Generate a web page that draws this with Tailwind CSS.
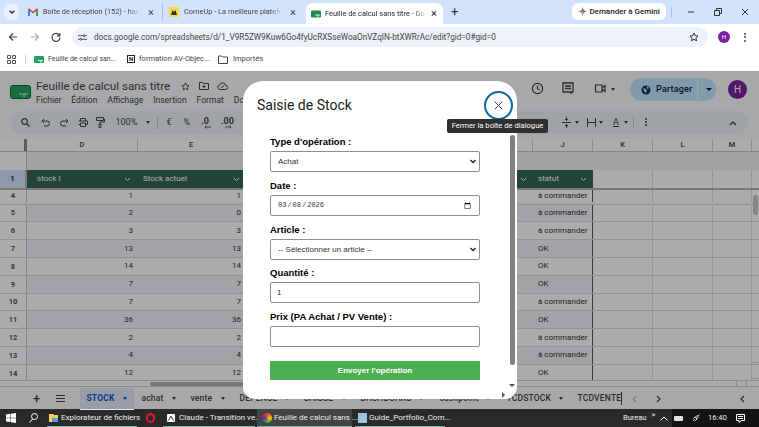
<!DOCTYPE html>
<html lang="fr">
<head>
    <meta charset="UTF-8">
    <title>Feuille de calcul sans titre</title>
    <script src="https://cdn.jsdelivr.net/npm/@tailwindcss/browser@4"></script>
</head>
<body class="bg-white">
<div class="relative w-[759px] h-[427px] overflow-hidden flex flex-col font-['Roboto',sans-serif]">

    <!-- chrome tabs -->
    <div class="h-[24px] bg-[#d3e3fd] flex items-end text-[7.400px] text-[#474747] shrink-0">
        <div class="w-[15px] h-[16px] ml-[4px] mb-[4px] rounded-[5px] bg-[#e8f0fe] flex items-center justify-center shrink-0">
            <svg class="w-[8px] h-[8px]" viewBox="0 0 10 10" fill="none" stroke="#1f1f1f" stroke-width="1.6"><path d="M2 3.5l3 3 3-3"/></svg>
        </div>
        <div class="w-[144px] h-[18px] mb-[3px] flex items-center pl-[9px] border-r border-[#a8c0e8] shrink-0">
            <svg class="w-[10px] h-[8px] shrink-0" viewBox="0 0 20 16"><path d="M0 2l3-1 7 6 7-6 3 1v14h-4V6l-6 5-6-5v10H0z" fill="#ea4335"/><path d="M0 2v14h4V6z" fill="#4285f4"/><path d="M20 2v14h-4V6z" fill="#34a853"/></svg>
            <span class="ml-[5px] w-[97px] whitespace-nowrap [mask-image:linear-gradient(to_right,black_88%,transparent)]">Boîte de réception (152) - hand</span>
            <span class="ml-[8px] text-[11px] leading-none">×</span>
        </div>
        <div class="w-[143px] h-[18px] mb-[3px] flex items-center pl-[6px] shrink-0">
            <span class="w-[10px] h-[10px] rounded-[2px] bg-[#f7d84a] shrink-0 flex items-center justify-center"><svg class="w-[6px] h-[5px]" viewBox="0 0 6 5" fill="#333"><path d="M0 5l1.500-5 1.500 2 1.500-2L6 5z"/></svg></span>
            <span class="ml-[5px] w-[98px] whitespace-nowrap [mask-image:linear-gradient(to_right,black_88%,transparent)]">ComeUp - La meilleure platefor</span>
            <span class="ml-[8px] text-[11px] leading-none">×</span>
        </div>
        <div class="w-[137px] h-[21px] bg-white rounded-t-[7px] flex items-center pl-[5px] text-[#1f1f1f] shrink-0">
            <svg class="w-[10px] h-[8px] shrink-0" viewBox="0 0 20 14"><rect width="20" height="14" rx="2" fill="#1e8e4e"/><path d="M8 9h10M14 9v5" stroke="#fff" stroke-width="1.600"/></svg>
            <span class="ml-[4px] w-[101px] whitespace-nowrap [mask-image:linear-gradient(to_right,black_88%,transparent)]">Feuille de calcul sans titre - Goo</span>
            <span class="ml-[5px] text-[11px] leading-none">×</span>
        </div>
        <span class="ml-[8px] mb-[3px] text-[13px] leading-[18px] text-[#333] shrink-0">+</span>
        <div class="ml-[114px] mb-[4px] w-[94px] h-[17px] bg-white rounded-[6px] flex items-center pl-[6px] text-[8px] font-medium text-[#1f1f1f] shrink-0">
            <svg class="w-[9px] h-[9px]" viewBox="0 0 10 10"><path d="M5 0C5.3 3 7 4.700 10 5 7 5.300 5.300 7 5 10 4.700 7 3 5.300 0 5 3 4.700 4.700 3 5 0z" fill="#4285f4"/><path d="M5 0C5.300 3 7 4.700 10 5L5 5z" fill="#ea4335"/><path d="M0 5c3 .3 4.700 2 5 5L5 5z" fill="#fbbc04"/></svg>
            <span class="ml-[2px] whitespace-nowrap">Demander à Gemini</span>
        </div>
        <span class="ml-[5px] mb-[7px] w-px h-[10px] bg-[#a8c0e8] shrink-0"></span>
        <div class="flex items-center mb-[8px] shrink-0">
            <svg class="ml-[15px] w-[8px] h-[8px]" viewBox="0 0 8 8" stroke="#333"><path d="M1 4h6"/></svg>
            <svg class="ml-[19px] w-[8px] h-[8px]" viewBox="0 0 8 8" stroke="#333" fill="none"><path d="M.5 2.500h5v5h-5zM2.500 2.500v-2h5v5h-2"/></svg>
            <svg class="ml-[19px] w-[8px] h-[8px]" viewBox="0 0 8 8" stroke="#333"><path d="M1 1l6 6M7 1l-6 6"/></svg>
        </div>
    </div>

    <!-- address bar -->
    <div class="h-[23px] pt-[3px] bg-white flex items-center shrink-0 text-[#444]">
        <svg class="ml-[8px] w-[10px] h-[10px]" viewBox="0 0 10 10" fill="none" stroke="#444" stroke-width="1.200"><path d="M9 5H1.500M5 1.500L1.500 5 5 8.500"/></svg>
        <svg class="ml-[12px] w-[10px] h-[10px]" viewBox="0 0 10 10" fill="none" stroke="#aaa" stroke-width="1.200"><path d="M1 5h7.500M5 1.500L8.500 5 5 8.500"/></svg>
        <svg class="ml-[11px] w-[10px] h-[10px]" viewBox="0 0 10 10" fill="none" stroke="#444" stroke-width="1.200"><path d="M8.500 3.500A4 4 0 1 0 9 5.500M8.800 1v2.800H6"/></svg>
        <div class="ml-[11px] w-[636px] h-[20px] bg-[#edf2fa] rounded-full flex items-center pl-[6px] relative shrink-0">
            <svg class="w-[9px] h-[9px]" viewBox="0 0 10 10" fill="none" stroke="#444"><path d="M0 3h6M8 3h2M0 7h2M4 7h6"/><circle cx="7" cy="3" r="1"/><circle cx="3" cy="7" r="1"/></svg>
            <span class="ml-[7px] text-[8.200px] whitespace-nowrap">docs.google.com/spreadsheets/d/1_V9R5ZW9Kuw6Go4fyUcRXSseWoaOnVZqIN-btXWRrAc/edit?gid=0#gid=0</span>
            <svg class="absolute right-[9px] w-[10px] h-[10px]" viewBox="0 0 10 10" fill="none" stroke="#333"><path d="M5 1l1.200 2.700 2.800.3-2.100 1.900.6 2.900L5 7.300 2.500 8.800l.6-2.900L1 4l2.800-.3z"/></svg>
        </div>
        <span class="ml-[10px] w-[12px] h-[12px] rounded-full bg-[#7b1fa2] text-white text-[6px] leading-[12px] text-center shrink-0">H</span>
        <span class="ml-[14px] flex flex-col gap-[1.500px] shrink-0"><i class="w-[2px] h-[2px] rounded-full bg-[#444]"></i><i class="w-[2px] h-[2px] rounded-full bg-[#444]"></i><i class="w-[2px] h-[2px] rounded-full bg-[#444]"></i></span>
    </div>

    <!-- bookmarks -->
    <div class="h-[24px] bg-white flex items-center shrink-0 text-[7.500px] text-[#444]">
        <svg class="ml-[7px] w-[9px] h-[9px]" viewBox="0 0 9 9" fill="none" stroke="#555"><path d="M.5.500h3v3h-3zM5.500.500h3v3h-3zM.5 5.500h3v3h-3zM5.500 5.500h3v3h-3z"/></svg>
        <span class="ml-[9px] w-px h-[9px] bg-[#ccc]"></span>
        <svg class="ml-[8px] w-[10px] h-[7px]" viewBox="0 0 20 14"><rect width="20" height="14" rx="2" fill="#1ea362"/><path d="M8 9h10M14 9v5" stroke="#fff" stroke-width="1.600"/></svg>
        <span class="ml-[4px] w-[67px] text-[7px] whitespace-nowrap">Feuille de calcul san...</span>
        <span class="ml-[12px] w-[8px] h-[8px] border border-[#222] text-[6px] leading-[6px] text-center font-bold text-[#111]">N</span>
        <span class="ml-[4px] w-[68px] whitespace-nowrap">formation AV-Objec...</span>
        <svg class="ml-[11px] w-[10px] h-[9px]" viewBox="0 0 10 9" fill="none" stroke="#444"><path d="M.5 1h3l1 1h5v6.500h-9z"/></svg>
        <span class="ml-[5px]">Importés</span>
    </div>

    <!-- sheets app, dimmed -->
    <div class="relative grow flex flex-col bg-[#f9fbfd] text-[#444746]">
        <div class="h-[40px] flex shrink-0 relative">
            <svg class="ml-[10px] mt-[14px] w-[21px] h-[14px]" viewBox="0 0 21 14"><rect x=".5" y=".5" width="20" height="13" rx="2.500" fill="#21a464" stroke="#0f6b3c"/><path d="M9 9h9M14 9v3" stroke="#fff" stroke-opacity=".85" stroke-width="1.100"/></svg>
            <div class="ml-[5px] mt-[8px]">
                <div class="flex items-center text-[11.700px] leading-[14px] whitespace-nowrap">Feuille de calcul sans titre
                    <svg class="ml-[11px] w-[9px] h-[9px]" viewBox="0 0 10 10" fill="none" stroke="#444"><path d="M5 1l1.200 2.700 2.800.3-2.100 1.900.6 2.900L5 7.300 2.500 8.800l.6-2.900L1 4l2.800-.3z"/></svg>
                    <svg class="ml-[9px] w-[10px] h-[8px]" viewBox="0 0 10 8" fill="none" stroke="#444"><path d="M.5.500h3l1 1h5v6h-9zM3.500 4.500h3M5 3v3"/></svg>
                    <svg class="ml-[8px] w-[11px] h-[8px]" viewBox="0 0 11 8" fill="none" stroke="#444"><path d="M3 7.500h5.500a2 2 0 0 0 .3-4A3.300 3.300 0 0 0 2.500 3 2.300 2.300 0 0 0 3 7.500zM4 4.500l1 1 2-2"/></svg>
                </div>
                <div class="flex gap-[10px] text-[8.500px] leading-[12px] mt-[1px] whitespace-nowrap"><span>Fichier</span><span>Édition</span><span>Affichage</span><span>Insertion</span><span>Format</span><span>Données</span></div>
            </div>
            <svg class="absolute left-[531px] top-[11px] w-[13px] h-[13px]" viewBox="0 0 14 14" fill="none" stroke="#444" stroke-width="1.300"><circle cx="7" cy="7" r="5.500"/><path d="M7 4v3.200l2 1.300"/></svg>
            <svg class="absolute left-[562px] top-[11px] w-[12px] h-[13px]" viewBox="0 0 12 13" fill="none" stroke="#444" stroke-width="1.300"><path d="M1 1h10v9H1zM3 4h6M3 6.500h6M9 10v2"/></svg>
            <svg class="absolute left-[594px] top-[12px] w-[12px] h-[11px]" viewBox="0 0 12 11" fill="none" stroke="#444" stroke-width="1.200"><path d="M1.500 2h6.500v7H1.500zM8 5l3-2.500v6L8 6"/></svg>
            <span class="absolute left-[611px] top-[17px] border-x-[2.500px] border-x-transparent border-t-[3px] border-t-[#444]"></span>
            <div class="absolute left-[630px] top-[7px] w-[86px] h-[23px] rounded-full bg-[#c2e7ff] flex items-center text-[9px] tracking-[0.2px] text-[#001d35] font-medium">
                <svg class="ml-[11px] w-[10px] h-[10px]" viewBox="0 0 10 10"><circle cx="5" cy="5" r="4.500" fill="#0b3a5c"/><path d="M2 3l3 1 1 2-2 2zM6 1l2 2-2 1z" fill="#c2e7ff"/></svg>
                <span class="ml-[5px] w-[41px]">Partager</span>
                <span class="ml-[0px] w-px h-[23px] bg-white/70"></span>
                <span class="ml-[8px] border-x-[3px] border-x-transparent border-t-[3px] border-t-[#001d35]"></span>
            </div>
            <div class="absolute left-[728px] top-[9px] w-[19px] h-[19px] rounded-full bg-[#7b1fa2] text-white text-[10px] leading-[19px] text-center">H</div>
        </div>

        <!-- toolbar -->
        <div class="h-[23px] mx-[11px] bg-[#edf2fa] rounded-full flex items-center text-[9px] shrink-0 relative">
            <svg class="ml-[9.500px] w-[9px] h-[9px]" viewBox="0 0 9 9" fill="none" stroke="#444" stroke-width="1.200"><circle cx="3.500" cy="3.500" r="2.800"/><path d="M5.500 5.500L8.500 8.500"/></svg>
            <svg class="ml-[11px] w-[9px] h-[9px]" viewBox="0 0 9 9" fill="none" stroke="#444"><path d="M1 3h5a2 2 0 0 1 0 5H3M3 1L1 3l2 2"/></svg>
            <svg class="ml-[10px] w-[9px] h-[9px]" viewBox="0 0 9 9" fill="none" stroke="#444"><path d="M8 3H3a2 2 0 0 0 0 5h3M6 1l2 2-2 2"/></svg>
            <svg class="ml-[9px] w-[10px] h-[9px]" viewBox="0 0 10 9" fill="none" stroke="#444"><path d="M2.500 3V.5h5V3M.5 3h9v3.500h-2M2.500 6.500h-2M2.500 5h5v3.500h-5z"/></svg>
            <svg class="ml-[8px] w-[9px] h-[11px]" viewBox="0 0 9 11" fill="none" stroke="#444"><path d="M.5.500h7v3h-7zM7.500 2h1v3H4v2M3 7h2v3.500H3z"/></svg>
            <span class="ml-[11px] w-[22px]">100%</span>
            <span class="ml-[8px] border-x-[2.500px] border-x-transparent border-t-[3px] border-t-[#444]"></span>
            <span class="ml-[7px] w-px h-[12px] bg-[#ccc]"></span>
            <span class="ml-[9px]">€</span>
            <span class="ml-[12px]">%</span>
            <span class="ml-[11px] font-bold relative top-[-1px]">.0<svg class="absolute left-[3px] top-[10px] w-[7px] h-[4px]" viewBox="0 0 7 4" fill="none" stroke="#444" stroke-width=".8"><path d="M7 2H1M2.500.5L1 2l1.500 1.500"/></svg></span>
            <span class="ml-[12px] font-bold relative top-[-1px]">.00<svg class="absolute left-[4px] top-[10px] w-[7px] h-[4px]" viewBox="0 0 7 4" fill="none" stroke="#444" stroke-width=".8"><path d="M0 2h6M4.500.5L6 2 4.500 3.500"/></svg></span>
            <svg class="absolute left-[551px] top-[6px] w-[9px] h-[11px]" viewBox="0 0 9 11" fill="none" stroke="#444"><path d="M0 5.500h9M4.500 0v3.500M3 2l1.500 1.500L6 2M4.500 11V7.500M3 9l1.500-1.500L6 9"/></svg>
            <span class="absolute left-[564px] top-[10px] border-x-[2.500px] border-x-transparent border-t-[3px] border-t-[#444]"></span>
            <svg class="absolute left-[576px] top-[6px] w-[9px] h-[11px]" viewBox="0 0 9 11" fill="none" stroke="#444"><path d="M.5 1v9M8.500 1v9M.5 5.500h8"/></svg>
            <span class="absolute left-[588px] top-[10px] border-x-[2.500px] border-x-transparent border-t-[3px] border-t-[#444]"></span>
            <span class="absolute left-[602px] top-[5px] underline">A</span>
            <span class="absolute left-[613px] top-[10px] border-x-[2.500px] border-x-transparent border-t-[3px] border-t-[#444]"></span>
            <span class="absolute left-[622px] top-[5px] w-px h-[12px] bg-[#ccc]"></span>
            <span class="absolute left-[634px] top-[7px] flex flex-col gap-px"><i class="w-[2px] h-[2px] rounded-full bg-[#444]"></i><i class="w-[2px] h-[2px] rounded-full bg-[#444]"></i><i class="w-[2px] h-[2px] rounded-full bg-[#444]"></i></span>
            <svg class="absolute left-[718px] top-[9px] w-[8px] h-[6px]" viewBox="0 0 8 6" fill="none" stroke="#444" stroke-width="1.300"><path d="M1 5l3-3 3 3"/></svg>
        </div>

        <!-- grid -->
        <div class="mt-[5px] grow flex flex-col min-h-0 text-[8px] relative">
            <div id="col-head" class="h-[13px] flex bg-white border-b border-[#c7c7c7] text-[7.500px] text-[#444] shrink-0"></div>
            <div id="frozen" class="h-[18px] flex bg-[#f1f3f4] shrink-0"></div>
            <div class="h-[20px] flex shrink-0 border-b-[2px] border-[#b4b4b4]">
                <div class="w-[27px] bg-[#d3e3fd] text-[#062e6f] text-[7.500px] font-bold flex items-center justify-center border-r-[2px] border-[#b4b4b4]">1</div>
                <div class="w-[111px] bg-[#356853] text-white flex items-center justify-between pl-[10px] pr-[7px]"><span>stock I</span><svg class="w-[7px] h-[5px]" viewBox="0 0 7 5" fill="none" stroke="#fff"><path d="M1 1l2.500 2.500L6 1"/></svg></div>
                <div class="w-[107px] bg-[#356853] text-white flex items-center justify-between pl-[5px] pr-[5px]"><span>Stock actuel</span><svg class="w-[7px] h-[5px]" viewBox="0 0 7 5" fill="none" stroke="#fff"><path d="M1 1l2.500 2.500L6 1"/></svg></div>
                <div class="w-[288px] bg-[#356853] flex items-center justify-end pr-[6px]"><svg class="w-[7px] h-[5px]" viewBox="0 0 7 5" fill="none" stroke="#fff"><path d="M1 1l2.500 2.500L6 1"/></svg></div>
                <div class="w-[60px] bg-[#356853] text-white flex items-center justify-between pl-[5px] pr-[6px]"><span>statut</span><svg class="w-[7px] h-[5px]" viewBox="0 0 7 5" fill="none" stroke="#fff"><path d="M1 1l2.500 2.500L6 1"/></svg></div>
                <div class="grow bg-white flex"><i class="w-[60px] border-r border-[#e0e0e0]"></i><i class="w-[60px] border-r border-[#e0e0e0]"></i><i class="w-[39px] border-r border-[#e0e0e0]"></i></div>
            </div>
            <div id="rows" class="h-[190px] overflow-hidden flex flex-col shrink-0"></div>
            <div class="h-[7px] bg-white border-y border-[#d0d0d0] shrink-0 relative">
                <span class="absolute left-[150px] top-[1px] w-[95px] h-[4px] rounded-full bg-[#b0b0b0]"></span>
                <span class="absolute left-[736px] top-0 w-[11px] h-[5px] border-x border-[#d0d0d0]"></span>
            </div>

            <!-- vertical scrollbar -->
            <span class="absolute left-[753px] top-[56px] w-[5px] h-[20px] rounded-full bg-[#c8c8c8]"></span>
            <span class="absolute left-[752px] top-[223px] w-[7px] h-[17px] border-y border-[#d0d0d0]"></span>

            <!-- sheet tabs -->
            <div class="h-[22px] pt-px bg-[#f9fbfd] flex items-center text-[8.500px] font-medium tracking-[0.2px] text-[#444] shrink-0 whitespace-nowrap">
                <span class="ml-[33px] text-[13px] leading-none shrink-0">+</span>
                <span class="ml-[16px] flex flex-col gap-[2px] shrink-0"><i class="w-[9px] h-px bg-[#444]"></i><i class="w-[9px] h-px bg-[#444]"></i><i class="w-[9px] h-px bg-[#444]"></i></span>
                <div class="ml-[15px] w-[54px] h-[22px] bg-[#e1e9f7] text-[#0b57d0] font-bold flex items-center pl-[6px] shrink-0">STOCK<span class="ml-auto mr-[7px] border-x-[2.500px] border-x-transparent border-t-[3px] border-t-[#0b57d0]"></span></div>
                <div class="w-[49px] flex items-center pl-[7px] shrink-0">achat<span class="ml-auto mr-[7px] border-x-[2.500px] border-x-transparent border-t-[3px] border-t-[#444]"></span></div>
                <div class="w-[49px] flex items-center pl-[7px] shrink-0">vente<span class="ml-auto mr-[7px] border-x-[2.500px] border-x-transparent border-t-[3px] border-t-[#444]"></span></div>
                <div class="w-[64px] flex items-center pl-[7px] shrink-0">DÉPENSE<span class="ml-auto mr-[7px] border-x-[2.500px] border-x-transparent border-t-[3px] border-t-[#444]"></span></div>
                <div class="w-[57px] flex items-center pl-[7px] shrink-0">CAISSE<span class="ml-auto mr-[7px] border-x-[2.500px] border-x-transparent border-t-[3px] border-t-[#444]"></span></div>
                <div class="w-[79px] flex items-center pl-[7px] shrink-0">DASHBOARD<span class="ml-auto mr-[9px] border-x-[2.500px] border-x-transparent border-t-[3px] border-t-[#444]"></span></div>
                <div class="w-[67px] flex items-center pl-[7px] shrink-0">cashpoint<span class="ml-auto mr-[9px] border-x-[2.500px] border-x-transparent border-t-[3px] border-t-[#444]"></span></div>
                <div class="w-[71px] flex items-center pl-[7px] shrink-0">TCDSTOCK<span class="ml-auto mr-[7px] border-x-[2.500px] border-x-transparent border-t-[3px] border-t-[#444]"></span></div>
                <div class="w-[52px] flex items-center pl-[7px] shrink-0 border-r border-[#444]">TCDVENTE</div>
                <svg class="ml-[10px] w-[5px] h-[8px] shrink-0" viewBox="0 0 5 8" fill="none" stroke="#bbb" stroke-width="1.200"><path d="M4 1L1 4l3 3"/></svg>
                <svg class="ml-[19px] w-[5px] h-[8px] shrink-0" viewBox="0 0 5 8" fill="none" stroke="#444" stroke-width="1.200"><path d="M1 1l3 3-3 3"/></svg>
                <svg class="ml-[79px] w-[5px] h-[8px] shrink-0" viewBox="0 0 5 8" fill="none" stroke="#444" stroke-width="1.200"><path d="M4 1L1 4l3 3"/></svg>
            </div>
        </div>

        <div class="absolute inset-0 bg-black/33"></div>
    </div>

    <!-- taskbar -->
    <div class="h-[18px] bg-[#2a2a2a] flex items-center text-[8px] text-[#eee] shrink-0 whitespace-nowrap">
        <svg class="ml-[6px] w-[10px] h-[10px] shrink-0" viewBox="0 0 10 10" fill="#fff"><path d="M0 1.500l4.500-.7v3.900H0zM5 .7L10 0v4.700H5zM0 5.200h4.500v3.900L0 8.500zM5 5.200h5V10l-5-.7z"/></svg>
        <svg class="ml-[13px] w-[9px] h-[10px] shrink-0" viewBox="0 0 9 10" fill="none" stroke="#fff"><circle cx="5.500" cy="3.500" r="3"/><path d="M3.500 6L.5 9.500"/></svg>
        <div class="ml-[9px] h-[18px] w-[90px] flex items-center border-b border-[#76b9a0] pl-[2px] shrink-0"><svg class="w-[9px] h-[8px] shrink-0" viewBox="0 0 9 8"><path d="M0 0h4l1 1h4v7H0z" fill="#f6cf5a"/><path d="M3 4h6v4H3z" fill="#4aa3df"/></svg><span class="ml-[3px]">Explorateur de fichiers</span></div>
        <div class="w-[26px] flex justify-center shrink-0"><span class="w-[9px] h-[10px] rounded-full border-[2px] border-[#e0182d]"></span></div>
        <div class="h-[18px] w-[92px] flex items-center border-b border-[#76b9a0] pl-[4px] shrink-0"><svg class="w-[8px] h-[8px] shrink-0" viewBox="0 0 8 8"><rect width="8" height="8" rx="1" fill="#fff"/><path d="M1.500 6.500L4 2l2.500 4.500" fill="none" stroke="#333"/></svg><span class="ml-[4px]">Claude - Transition ve...</span></div>
        <div class="ml-[2px] h-[18px] w-[95px] flex items-center bg-[#444] border-b border-[#76b9a0] pl-[5px] shrink-0"><span class="w-[10px] h-[10px] rounded-full bg-[conic-gradient(#ea4335,#fbbc04,#34a853,#7b1fa2,#ea4335)] shrink-0"></span><span class="ml-[2px]">Feuille de calcul sans ...</span></div>
        <div class="ml-[3px] h-[18px] w-[90px] flex items-center border-b border-[#76b9a0] pl-[3px] shrink-0"><span class="w-[9px] h-[10px] bg-[#9cc4dc] shrink-0"></span><span class="ml-[2px]">Guide_Portfolio_Com...</span></div>
        <span class="ml-[178px] text-[7.500px] shrink-0">Bureau</span>
        <span class="ml-[5px] text-[8px] leading-none mb-[6px] shrink-0">»</span>
        <div class="ml-auto w-[87px] h-[18px] bg-[#141414] flex items-center shrink-0 relative">
            <svg class="absolute left-[-12px] w-[8px] h-[5px]" viewBox="0 0 8 5" fill="none" stroke="#fff"><path d="M.5 4.500L4 1l3.500 3.500"/></svg>
            <span class="ml-[2px] w-[9px] h-[5px] bg-[#ddd] rounded-[1px]"></span>
            <svg class="ml-[9px] w-[8px] h-[8px]" viewBox="0 0 8 8" fill="none" stroke="#ddd"><path d="M1 7l2-2M3 3l2 2-1.500 1.500-2-2zM5 1.500l1.500 1.500L5 4.500 3.500 3zM6 2l1.500-1.500"/></svg>
            <span class="ml-[8px] text-[7.500px]">16:40</span>
            <svg class="ml-[9px] w-[9px] h-[9px]" viewBox="0 0 9 9" fill="none" stroke="#fff"><path d="M.5.500h8v6h-3L3 8.500v-2H.5zM2 2.500h5M2 4.500h5"/></svg>
        </div>
    </div>

    <!-- dialog -->
    <div class="absolute left-[243px] top-[81px] w-[274px] h-[318px] bg-white rounded-[20px] rounded-b-[12px] font-['Liberation_Sans',sans-serif]">
        <div class="h-[48px] flex items-center pl-[14px] pr-[4px] justify-between">
            <h1 class="text-[14px] text-[#202124] font-['Roboto',sans-serif]">Saisie de Stock</h1>
            <button class="w-[29px] h-[29px] rounded-full border-[2px] border-[#0b6a9e] flex items-center justify-center">
                <svg class="w-[9px] h-[9px]" viewBox="0 0 10 10" stroke="#444" stroke-width="1.100"><path d="M.7.7l8.600 8.600M9.300.7L.7 9.300"/></svg>
            </button>
        </div>
        <form class="pl-[27px] w-[237px] flex flex-col text-[9.500px] text-black">
            <label class="font-bold leading-[14px] mt-[6px] mb-[2px]">Type d'opération :</label>
            <div class="relative w-[210px]">
                <select class="appearance-none block h-[21px] w-full text-[8px] pl-[7px] text-[#333] border border-[#8f8f8f] rounded-[2px] bg-white"><option>Achat</option></select>
                <svg class="absolute right-[4px] top-[8px] w-[6px] h-[5px]" viewBox="0 0 6 5" fill="none" stroke="#222" stroke-width="1.400"><path d="M.5 1l2.500 2.500L5.500 1"/></svg>
            </div>
            <label class="font-bold leading-[14px] mt-[7px] mb-[2px]">Date :</label>
            <input type="date" value="2026-03-08" class="h-[21px] w-[210px] text-[7px] font-['Liberation_Mono',monospace] text-[#333] px-[6px] border border-[#8f8f8f] rounded-[2px]">
            <label class="font-bold leading-[14px] mt-[7px] mb-[2px]">Article :</label>
            <div class="relative w-[210px]">
                <select class="appearance-none block h-[21px] w-full text-[8px] pl-[7px] text-[#333] border border-[#8f8f8f] rounded-[2px] bg-white"><option>-- Sélectionner un article --</option></select>
                <svg class="absolute right-[4px] top-[8px] w-[6px] h-[5px]" viewBox="0 0 6 5" fill="none" stroke="#222" stroke-width="1.400"><path d="M.5 1l2.500 2.500L5.500 1"/></svg>
            </div>
            <label class="font-bold leading-[14px] mt-[6px] mb-[2px]">Quantité :</label>
            <input type="text" value="1" class="h-[21px] w-[210px] text-[8px] text-[#333] px-[6px] border border-[#8f8f8f] rounded-[2px]">
            <label class="font-bold leading-[14px] mt-[7px] mb-[2px]">Prix (PA Achat / PV Vente) :</label>
            <input type="text" class="h-[21px] w-[210px] text-[8px] px-[6px] border border-[#8f8f8f] rounded-[2px]">
            <button type="button" class="mt-[14px] h-[19px] w-[210px] bg-[#4caf50] text-white text-[8px] font-bold">Envoyer l'opération</button>
        </form>
        <span class="absolute left-[267px] top-[54px] w-[5px] h-[230px] rounded-full bg-[#808080]"></span>
        <span class="absolute left-[266px] top-[303px] border-x-[3px] border-x-transparent border-t-[3px] border-t-[#555]"></span>
        <span class="absolute left-[259px] top-[311px] border-y-[3px] border-y-transparent border-l-[3px] border-l-[#555]"></span>
    </div>

    <!-- tooltip -->
    <div class="absolute left-[447px] top-[119px] w-[101px] h-[14px] bg-[#303030] rounded-[2px] text-white text-[7.600px] leading-[14px] text-center whitespace-nowrap">Fermer la boîte de dialogue</div>
</div>

<script>
    // columns as they sit in the grid
    const colHead = document.getElementById('col-head');
    const frozen = document.getElementById('frozen');
    const cols = [['', 27], ['D', 111], ['E', 107], ['', 288], ['J', 60], ['K', 60], ['L', 60], ['M', 39]];
    cols.forEach(([name, w], i) => {
        const cell = document.createElement('div');
        cell.className = i === 0 ? 'border-r-[3px] border-[#8a8a8a]' : 'flex items-center justify-center font-medium border-r border-[#d0d0d0]';
        cell.style.width = w + 'px';
        cell.textContent = name;
        colHead.appendChild(cell);

        const f = document.createElement('div');
        f.className = i === 0 ? 'bg-white border-r border-[#c7c7c7]' : '';
        f.style.width = w + 'px';
        frozen.appendChild(f);
    });

    const data = [
        [4, 1, 1, 'à commander'], [5, 2, 0, 'à commander'], [6, 3, 3, 'à commander'],
        [7, 13, 13, 'OK'], [8, 14, 14, 'OK'], [9, 7, 7, 'OK'],
        [10, 7, 7, 'à commander'], [11, 36, 36, 'OK'], [12, 2, 2, 'à commander'],
        [13, 4, 4, 'à commander'], [14, 12, 12, 'OK']
    ];
    const rows = document.getElementById('rows');
    data.forEach((r, i) => {
        const shade = i % 2 ? 'bg-[#f2f4f8]' : 'bg-white';
        const row = document.createElement('div');
        // row 4 is partly hidden under the frozen header
        row.className = (i === 0 ? 'h-[14.700px] pb-[2px]' : 'h-[17.800px]') + ' flex shrink-0 border-b border-[#dadada] text-[#333]';
        row.innerHTML = `
            <div class="w-[27px] bg-white text-[7.500px] font-bold text-[#555] flex items-center justify-center border-r border-[#c7c7c7]">${r[0]}</div>
            <div class="w-[111px] ${shade} flex items-center justify-end pr-[5px]">${r[1]}</div>
            <div class="w-[107px] ${shade} flex items-center justify-end pr-[4px]">${r[2]}</div>
            <div class="w-[288px] ${shade}"></div>
            <div class="w-[60px] ${shade} flex items-center pl-[5px] border-r border-[#555]">${r[3]}</div>
            <div class="grow bg-white flex"><i class="w-[60px] border-r border-[#e0e0e0]"></i><i class="w-[60px] border-r border-[#e0e0e0]"></i><i class="w-[39px] border-r border-[#e0e0e0]"></i></div>`;
        rows.appendChild(row);
    });
</script>
</body>
</html>
